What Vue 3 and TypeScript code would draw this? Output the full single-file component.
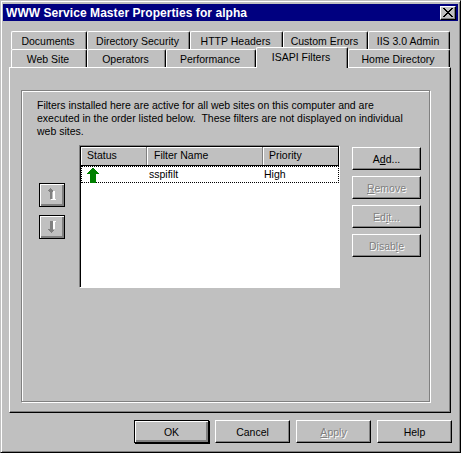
<script setup lang="ts">
interface Tab {
  label: string;
  width: number;
  active?: boolean;
}

const topTabs: Tab[] = [
  { label: "Documents", width: 76 },
  { label: "Directory Security", width: 103 },
  { label: "HTTP Headers", width: 93 },
  { label: "Custom Errors", width: 85 },
  { label: "IIS 3.0 Admin", width: 82 },
];
const bottomTabs: Tab[] = [
  { label: "Web Site", width: 76 },
  { label: "Operators", width: 79 },
  { label: "Performance", width: 90 },
  { label: "ISAPI Filters", width: 92, active: true },
  { label: "Home Directory", width: 102 },
];
</script>

<template>
  <div class="dialog">
    <div class="title">
      <span class="title-text">WWW Service Master Properties for alpha</span>
      <button class="close">
        <svg width="10" height="9" viewBox="0 0 10 9" shape-rendering="crispEdges">
          <path d="M0 0h2v1h1v1h1v1h2V2h1V1h1V0h2v1H9v1H8v1H7v1H6v1h1v1h1v1h1v1h1v1H8V8H7V7H6V6H4v1H3v1H2v1H0V8h1V7h1V6h1V5h1V4H3V3H2V2H1V1H0z" fill="#000" />
        </svg>
      </button>
    </div>

    <div class="tabs">
      <div class="tab-row">
        <div v-for="t in topTabs" :key="t.label" class="tab" :style="{ width: t.width + 'px' }">{{ t.label }}</div>
      </div>
      <div class="tab-row">
        <div
          v-for="t in bottomTabs"
          :key="t.label"
          class="tab"
          :class="{ active: t.active }"
          :style="{ width: t.width + 'px' }"
        >{{ t.label }}</div>
      </div>
    </div>

    <div class="page">
      <div class="group">
        <p class="intro">Filters installed here are active for all web sites on this computer and are<br />executed in the order listed below.&nbsp; These filters are not displayed on individual<br />web sites.</p>
        <div class="content">
          <div class="order">
            <button class="arrow-btn">
              <svg width="12" height="14" viewBox="0 0 12 14" shape-rendering="crispEdges">
                <path d="M7 3h2v8h1v1H5v-1h2z" fill="#fff" />
                <path d="M4 0h1v1h1v1h1v2H6v7H4V4H3V3H2V2h1V1h1z" fill="#808080" />
              </svg>
            </button>
            <button class="arrow-btn">
              <svg width="12" height="14" viewBox="0 0 12 14" shape-rendering="crispEdges">
                <path d="M5 1h5v1H9v7H7V2H5z" fill="#fff" />
                <path d="M4 1h3v9h1v1H7v1H6v1H5v-1H4v-1H3v-1H2V9h2z" fill="#808080" />
              </svg>
            </button>
          </div>

          <div class="list">
            <div class="list-head">
              <div class="col col-status">Status</div>
              <div class="col col-name">Filter Name</div>
              <div class="col col-priority">Priority</div>
            </div>
            <div class="list-row">
              <div class="cell-status">
                <svg width="12" height="16" viewBox="0 0 12 16" shape-rendering="crispEdges">
                  <path d="M6 0l6 7H9v9H3V7H0z" fill="#008000" />
                </svg>
              </div>
              <div>sspifilt</div>
              <div>High</div>
            </div>
          </div>

          <div class="actions">
            <button class="btn"><span>A<u>d</u>d...</span></button>
            <button class="btn" disabled><span><u>R</u>emove</span></button>
            <button class="btn" disabled><span>Ed<u>i</u>t...</span></button>
            <button class="btn" disabled><span>Disab<u>l</u>e</span></button>
          </div>
        </div>
      </div>
    </div>

    <div class="footer">
      <button class="btn wide default"><span>OK</span></button>
      <button class="btn wide"><span>Cancel</span></button>
      <button class="btn wide" disabled><span><u>A</u>pply</span></button>
      <button class="btn wide"><span>Help</span></button>
    </div>
  </div>
</template>

<style>
html,
body {
  margin: 0;
  background: #c0c0c0;
}
</style>

<style scoped>
.dialog {
  box-sizing: border-box;
  width: 461px;
  height: 453px;
  display: flex;
  flex-direction: column;
  background: #c0c0c0;
  border: 1px solid;
  border-color: #c0c0c0 #000 #000 #c0c0c0;
  box-shadow: inset 1px 1px 0 #fff, inset -1px -1px 0 #808080;
  padding: 3px 2px 0;
  font-family: "Liberation Sans", Arial, sans-serif;
  font-size: 10.5px;
  color: #000;
}
.title {
  height: 17px;
  flex: none;
  display: flex;
  align-items: center;
  justify-content: space-between;
  background: #000080;
  color: #fff;
  padding: 0 2px 0 3px;
}
.title-text {
  font-weight: bold;
  font-size: 12px;
  letter-spacing: 0.06px;
  white-space: nowrap;
}
.close {
  box-sizing: border-box;
  width: 16px;
  height: 14px;
  padding: 0;
  display: flex;
  align-items: center;
  justify-content: center;
  background: #c0c0c0;
  border: 1px solid;
  border-color: #fff #000 #000 #fff;
  box-shadow: inset -1px -1px 0 #808080;
}
.tabs {
  margin: 10px 6px 0 6px;
  padding-left: 2px;
  flex: none;
}
.tab-row {
  display: flex;
  height: 18px;
}
.tab {
  box-sizing: border-box;
  height: 18px;
  padding-right: 2px;
  border: 1px solid;
  border-color: #fff #000 transparent #fff;
  border-bottom: 0;
  border-radius: 2px 2px 0 0;
  box-shadow: inset -1px 0 0 #808080;
  text-align: center;
  line-height: 19px;
  white-space: nowrap;
  background: #c0c0c0;
}
.tab.active {
  position: relative;
  z-index: 1;
  height: 21px;
  margin-top: -2px;
  line-height: 19px;
}
.page {
  box-sizing: border-box;
  width: 442px;
  height: 346px;
  margin-left: 6px;
  flex: none;
  border: 1px solid;
  border-color: #fff #000 #000 #fff;
  box-shadow: inset -1px -1px 0 #808080;
  padding: 22px 0 0 11px;
}
.group {
  box-sizing: border-box;
  width: 409px;
  height: 312px;
  border: 1px solid #808080;
  box-shadow: 1px 1px 0 #fff, inset 1px 1px 0 #fff;
  padding: 8px 0 0 15px;
}
.intro {
  margin: 0;
  line-height: 13px;
  white-space: nowrap;
}
.content {
  display: flex;
  margin-top: 7px;
}
.order {
  display: flex;
  flex-direction: column;
  gap: 8px;
  margin: 38px 14px 0 2px;
}
.arrow-btn {
  box-sizing: border-box;
  width: 26px;
  height: 24px;
  padding: 0;
  display: flex;
  align-items: center;
  justify-content: center;
  background: #c0c0c0;
  border: 1px solid #000;
  box-shadow: inset 1px 1px 0 #fff, inset -2px -2px 0 #808080;
}
.list {
  box-sizing: border-box;
  width: 261px;
  height: 143px;
  background: #fff;
  border: 1px solid;
  border-color: #808080 #fff #fff #808080;
  box-shadow: inset 1px 1px 0 #000;
  padding: 1px 0 0 1px;
}
.list-head {
  display: flex;
  height: 18px;
  background: #c0c0c0;
  border-bottom: 1px solid #000;
  border-right: 1px solid #000;
}
.col {
  box-sizing: border-box;
  line-height: 17px;
  border-right: 1px solid #808080;
  box-shadow: inset 1px 1px 0 #fff;
  white-space: nowrap;
}
.col-status {
  width: 66px;
  padding-left: 6px;
}
.col-name {
  width: 116px;
  padding-left: 7px;
}
.col-priority {
  flex: 1;
  padding-left: 6px;
  border-right: 0;
}
.list-row {
  box-sizing: border-box;
  height: 17px;
  display: grid;
  grid-template-columns: 67px 115px 1fr;
  align-items: center;
  border: 1px dotted #000;
  line-height: 15px;
}
.cell-status {
  height: 15px;
  padding-left: 5px;
}
.cell-status svg {
  display: block;
}
.actions {
  display: flex;
  flex-direction: column;
  gap: 6px;
  margin: 2px 0 0 12px;
}
.btn {
  box-sizing: border-box;
  width: 69px;
  height: 23px;
  padding: 0;
  background: #c0c0c0;
  font: inherit;
  color: #000;
  border: 1px solid;
  border-color: #fff #000 #000 #fff;
  box-shadow: inset -1px -1px 0 #808080;
}
.btn:disabled {
  color: #808080;
  text-shadow: 1px 1px 0 #fff;
}
.footer {
  display: flex;
  gap: 6px;
  margin: 7px 0 0 131px;
}
.btn.wide {
  width: 75px;
}
.btn.default {
  border-color: #000;
  box-shadow: inset 1px 1px 0 #fff, inset -2px -2px 0 #808080, 1px 1px 0 #000;
}
</style>
